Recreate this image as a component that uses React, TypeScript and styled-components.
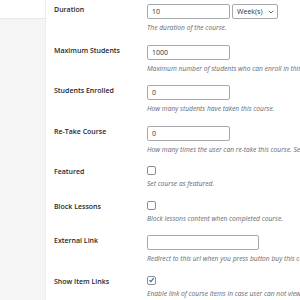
import React from "react";
import styled, { createGlobalStyle } from "styled-components";

const Global = createGlobalStyle`
  html, body { margin: 0; padding: 0; background: #fff; }
  body { width: 300px; height: 300px; overflow: hidden; font-family: "Open Sans", "Noto Sans", sans-serif; color: #1d2327; }
`;

const Page = styled.div`
  display: flex;
  width: 300px;
  height: 300px;
  overflow: hidden;
`;

const Tabs = styled.div`
  flex: 0 0 45px;
  background: #f5f5f5;
  border-right: 1px solid #eeeeee;
  display: flex;
  flex-direction: column;
`;

const ActiveTab = styled.div`
  height: 18px;
  background: #fff;
  border-bottom: 1px solid #e8e8e8;
`;

const Main = styled.div`
  flex: 1;
  padding-left: 8px;
  min-width: 0;
`;

const Row = styled.div`
  display: grid;
  grid-template-columns: 93px 1fr;
  padding: 4px 0 6.5px;
`;

const Label = styled.div`
  font-size: 7px;
  font-weight: 600;
  line-height: 12px;
  color: #23282d;
  white-space: nowrap;
`;

const Field = styled.div`
  display: flex;
  flex-direction: column;
  align-items: flex-start;
  min-width: 0;
`;

const Inline = styled.div`
  display: flex;
  gap: 2px;
`;

const TextBox = styled.div<{ $w: number }>`
  box-sizing: border-box;
  width: ${(p) => p.$w}px;
  height: 15px;
  border: 1px solid #a7aaad;
  border-radius: 2px;
  padding: 0 4px;
  font-size: 7px;
  line-height: 13px;
  color: #2c3338;
  background: #fff;
`;

const SelectBox = styled.div`
  box-sizing: border-box;
  width: 46px;
  height: 15px;
  border: 1px solid #a7aaad;
  border-radius: 2px;
  padding: 0 3px 0 4px;
  font-size: 7px;
  line-height: 13px;
  color: #2c3338;
  display: flex;
  align-items: center;
  justify-content: space-between;
`;

const Check = styled.div`
  box-sizing: border-box;
  width: 9px;
  height: 9px;
  border: 1px solid #8c8f94;
  border-radius: 2px;
  background: #fff;
  display: flex;
  align-items: center;
  justify-content: center;
`;

const Desc = styled.div`
  margin-top: 3px;
  font-size: 6.7px;
  font-style: italic;
  line-height: 12px;
  color: #646970;
  white-space: nowrap;
`;

const Chevron = () => (
  <svg width="6" height="4" viewBox="0 0 6 4">
    <path d="M0.8 0.8 L3 3 L5.2 0.8" fill="none" stroke="#50575e" strokeWidth="0.9" />
  </svg>
);

const Tick = () => (
  <svg width="8" height="8" viewBox="0 0 8 8">
    <path d="M1.6 4.2 L3.3 5.9 L6.6 1.8" fill="none" stroke="#2271b1" strokeWidth="1.4" />
  </svg>
);

type RowDef = { label: string; desc: string; control: React.ReactNode };

const rows: RowDef[] = [
  {
    label: "Duration",
    desc: "The duration of the course.",
    control: (
      <Inline>
        <TextBox $w={83}>10</TextBox>
        <SelectBox>
          Week(s) <Chevron />
        </SelectBox>
      </Inline>
    ),
  },
  {
    label: "Maximum Students",
    desc: "Maximum number of students who can enroll in this course.",
    control: <TextBox $w={83}>1000</TextBox>,
  },
  {
    label: "Students Enrolled",
    desc: "How many students have taken this course.",
    control: <TextBox $w={83}>0</TextBox>,
  },
  {
    label: "Re-Take Course",
    desc: "How many times the user can re-take this course. Set to 0 to disable re-taking.",
    control: <TextBox $w={83}>0</TextBox>,
  },
  { label: "Featured", desc: "Set course as featured.", control: <Check /> },
  { label: "Block Lessons", desc: "Block lessons content when completed course.", control: <Check /> },
  {
    label: "External Link",
    desc: "Redirect to this url when you press button buy this course.",
    control: <TextBox $w={112} />,
  },
  {
    label: "Show Item Links",
    desc: "Enable link of course items in case user can not view content of them.",
    control: (
      <Check>
        <Tick />
      </Check>
    ),
  },
];

export default function App() {
  return (
    <Page>
      <Global />
      <Tabs>
        <ActiveTab />
      </Tabs>
      <Main>
        {rows.map((r) => (
          <Row key={r.label}>
            <Label>{r.label}</Label>
            <Field>
              {r.control}
              <Desc>{r.desc}</Desc>
            </Field>
          </Row>
        ))}
      </Main>
    </Page>
  );
}
